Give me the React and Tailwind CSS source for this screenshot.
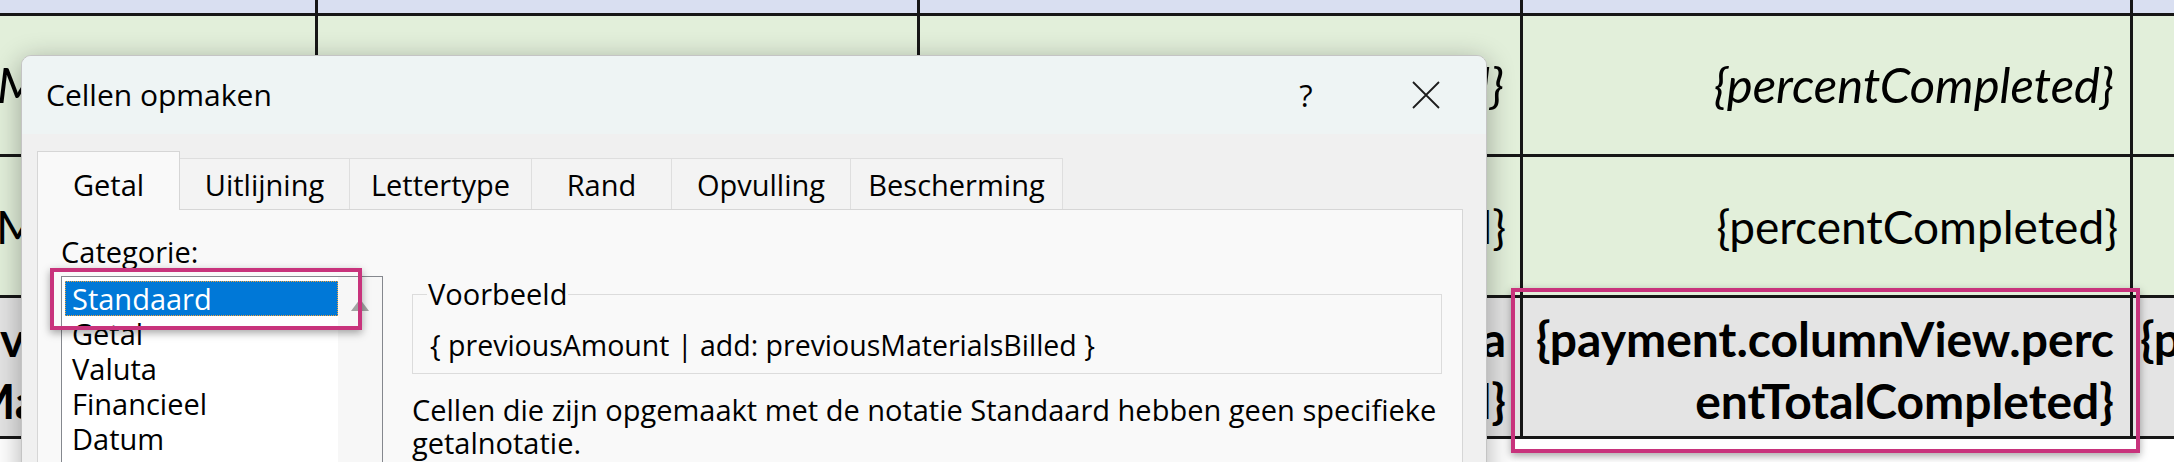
import React from 'react';

const ui = "font-['Open_Sans',sans-serif]";
const cell = "font-['Lato',sans-serif]";

const tabs = [
  { label: 'Getal', w: 'w-[143px]', active: true },
  { label: 'Uitlijning', w: 'w-[171px]' },
  { label: 'Lettertype', w: 'w-[183px]' },
  { label: 'Rand', w: 'w-[141px]' },
  { label: 'Opvulling', w: 'w-[180px]' },
  { label: 'Bescherming', w: 'w-[213px]' },
];

const categories = ['Standaard', 'Getal', 'Valuta', 'Financieel', 'Datum', 'Tijd'];

const Sheet = () => {
  const line = 'border-[#161616]';
  return (
    <div className={`${cell} text-[46px] text-black`}>
      {/* header band */}
      <div className={`flex h-[16px] border-b-[3px] ${line} bg-[#d9dff1]`}>
        <div className={`w-[318px] border-r-[3px] ${line}`} />
        <div className={`w-[602px] border-r-[3px] ${line}`} />
        <div className={`w-[603px] border-r-[3px] ${line}`} />
        <div className={`w-[610px] border-r-[3px] ${line}`} />
        <div className="flex-1" />
      </div>

      {/* row 1 */}
      <div className={`flex h-[141px] border-b-[3px] ${line} bg-[#e2efda] text-[49px] italic`}>
        <div className={`flex w-[318px] items-center overflow-hidden border-r-[3px] ${line}`}>
          <span className="-ml-[3px] whitespace-nowrap">Materials</span>
        </div>
        <div className={`w-[602px] border-r-[3px] ${line}`} />
        <div className={`flex w-[603px] items-center justify-end border-r-[3px] ${line} pr-[16px]`}>
          <span className="whitespace-nowrap">{'{previousMaterialsTotal}'}</span>
        </div>
        <div className={`flex w-[610px] items-center justify-end border-r-[3px] ${line} pr-[16px]`}>
          <span className="whitespace-nowrap">{'{percentCompleted}'}</span>
        </div>
        <div className="flex-1" />
      </div>

      {/* row 2 */}
      <div className={`flex h-[141px] border-b-[3px] ${line} bg-[#e2efda]`}>
        <div className={`flex w-[318px] items-center overflow-hidden border-r-[3px] ${line}`}>
          <span className="-ml-[4px] whitespace-nowrap">Materials</span>
        </div>
        <div className={`w-[602px] border-r-[3px] ${line}`} />
        <div className={`flex w-[603px] items-center justify-end border-r-[3px] ${line} pr-[14px]`}>
          <span className="whitespace-nowrap">{'{previousMaterialsBilledTotal}'}</span>
        </div>
        <div className={`flex w-[610px] items-center justify-end border-r-[3px] ${line} pr-[12px]`}>
          <span className="whitespace-nowrap">{'{percentCompleted}'}</span>
        </div>
        <div className="flex-1" />
      </div>

      {/* row 3 */}
      <div className={`flex h-[141px] border-b-[3px] ${line} bg-[#e4e4e4] text-[48px] font-bold leading-[62px]`}>
        <div className={`flex w-[318px] flex-col justify-center overflow-hidden border-r-[3px] ${line} pt-[6px]`}>
          <span className="whitespace-nowrap">vious</span>
          <span className="-ml-[30px] whitespace-nowrap">Materials</span>
        </div>
        <div className={`w-[602px] border-r-[3px] ${line}`} />
        <div className={`flex w-[603px] flex-col items-end justify-center border-r-[3px] ${line} pr-[14px] pt-[6px]`}>
          <span className="whitespace-nowrap">{'{payment.columnView.previousMateria'}</span>
          <span className="whitespace-nowrap">{'lsBilledTotal}'}</span>
        </div>
        <div className={`flex w-[610px] flex-col items-end justify-center border-r-[3px] ${line} pr-[16px] pt-[6px]`}>
          <span className="whitespace-nowrap">{'{payment.columnView.perc'}</span>
          <span className="whitespace-nowrap">{'entTotalCompleted}'}</span>
        </div>
        <div className="flex flex-1 flex-col justify-center overflow-hidden pl-[7px] pt-[6px]">
          <span className="whitespace-nowrap">{'{payment.columnView.previous'}</span>
          <span className="whitespace-nowrap">&nbsp;</span>
        </div>
      </div>
    </div>
  );
};

const Dialog = () => (
  <div
    className={`${ui} absolute left-[21px] top-[55px] h-[460px] w-[1466px] overflow-hidden rounded-t-[10px] border border-[#c4c4c4] bg-[#f0f0f0] text-black shadow-[0_6px_28px_rgba(0,0,0,0.32)]`}
  >
    {/* title bar */}
    <div className="flex h-[78px] items-center bg-[#eef4f4] pl-[24px]">
      <span className="text-[30px] leading-none">Cellen opmaken</span>
      <div className="ml-auto flex h-full">
        <div className="flex w-[120px] items-center justify-center text-[31px]">?</div>
        <div className="flex w-[120px] items-center justify-center">
          <svg width="28" height="28" viewBox="0 0 28 28" fill="none" stroke="#1c1c1c" strokeWidth="1.8">
            <path d="M1 1 L27 27 M27 1 L1 27" />
          </svg>
        </div>
      </div>
    </div>

    {/* body */}
    <div className="px-[15px] pt-[17px] text-[29px]">
      {/* tabs */}
      <div className="flex items-end">
        {tabs.map((t) =>
          t.active ? (
            <div
              key={t.label}
              className={`relative z-10 -mb-[1px] flex h-[59px] ${t.w} justify-center border border-b-0 border-[#d6d6d6] bg-[#f9f9f9] pt-[16px] leading-[34px]`}
            >
              {t.label}
            </div>
          ) : (
            <div
              key={t.label}
              className={`-ml-[1px] flex h-[51px] ${t.w} justify-center border border-b-0 border-[#dedede] bg-[#f3f3f3] pt-[9px] leading-[34px]`}
            >
              {t.label}
            </div>
          )
        )}
      </div>

      {/* panel */}
      <div className="flex h-[300px] w-[1426px] border border-[#d6d6d6] bg-[#f9f9f9] pl-[23px] pt-[25px]">
        {/* category column */}
        <div className="w-[322px]">
          <div className="leading-[34px]">
            <span className="underline decoration-1 underline-offset-[5px]">C</span>ategorie:
          </div>
          <div className="mt-[7px] flex h-[300px] border border-[#85888e] bg-white">
            <div className="w-[276px] pl-[3px] pt-[4px]">
              {categories.map((c, i) => (
                <div
                  key={c}
                  className={
                    i === 0
                      ? 'h-[35px] border border-dotted border-[#f0a33c] bg-[#0078d7] pl-[6px] leading-[33px] text-white'
                      : 'h-[35px] pl-[7px] leading-[35px]'
                  }
                >
                  {c}
                </div>
              ))}
            </div>
            <div className="flex flex-1 justify-center bg-[#f7f7f7] pt-[21px]">
              <svg width="20" height="14" viewBox="0 0 20 14">
                <path d="M10 1 L19 13 L1 13 Z" fill="#a3a3a3" />
              </svg>
            </div>
          </div>
        </div>

        {/* preview + description */}
        <div className="ml-[29px] mt-[42px]">
          <fieldset className="w-[1030px] border border-[#dcdcdc] px-[14px] pb-[11px] pt-[17px]">
            <legend className="px-[1px] leading-[34px]">Voorbeeld</legend>
            <div className="whitespace-nowrap pl-[3px] text-[28.5px] leading-[34px]">
              {'{ previousAmount | add: previousMaterialsBilled }'}
            </div>
          </fieldset>
          <p className="mt-[19px] leading-[33px]">
            <span className="whitespace-nowrap">
              Cellen die zijn opgemaakt met de notatie Standaard hebben geen specifieke
            </span>
            <br />
            getalnotatie.
          </p>
        </div>
      </div>
    </div>
  </div>
);

export default function App() {
  return (
    <div className="relative h-[462px] w-[2174px] overflow-hidden bg-white">
      <Sheet />
      <Dialog />
      {/* highlight marks */}
      <div className="absolute left-[50px] top-[268px] h-[62px] w-[312px] border-[4px] border-[#c8337c] shadow-[0_3px_8px_rgba(0,0,0,0.35)]" />
      <div className="absolute left-[1511px] top-[288px] h-[165px] w-[629px] border-[4px] border-[#c8337c] shadow-[0_3px_8px_rgba(0,0,0,0.35)]" />
    </div>
  );
}
